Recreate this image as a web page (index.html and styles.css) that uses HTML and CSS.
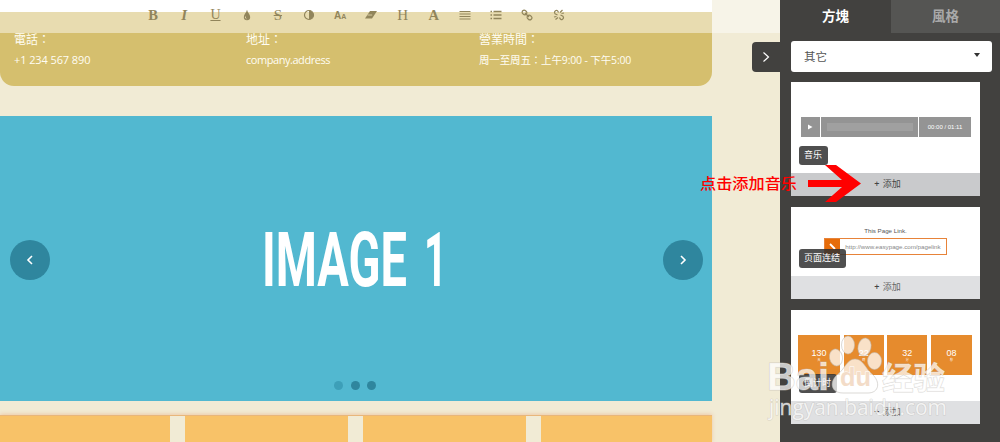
FILE: index.html
```html
<!DOCTYPE html>
<html lang="zh">
<head>
<meta charset="utf-8">
<title>Page editor</title>
<link rel="stylesheet" href="styles.css">
</head>
<body>
<div class="app">
  <main class="stage">
    <div class="page">
      <section class="contact" lang="zh-TW">
        <div class="contact-item phone"><h3>電話：</h3><p>+1 234 567 890</p></div>
        <div class="contact-item address"><h3>地址：</h3><p>company.address</p></div>
        <div class="contact-item hours"><h3>營業時間：</h3><p>周一至周五：上午9:00 - 下午5:00</p></div>
      </section>
      <section class="slider">
        <button class="arrow"><svg width="10" height="12" viewBox="0 0 10 12"><path d="M7 2 3 6l4 4"/></svg></button>
        <svg class="slide-title" width="182" height="68" viewBox="0 0 182 68"><text x="-4" y="60" textLength="145" lengthAdjust="spacingAndGlyphs">IMAGE</text><text x="158" y="60" textLength="23" lengthAdjust="spacingAndGlyphs">1</text></svg>
        <button class="arrow"><svg width="10" height="12" viewBox="0 0 10 12"><path d="m3 2 4 4-4 4"/></svg></button>
        <div class="dots"><i class="dot current"></i><i class="dot"></i><i class="dot"></i></div>
      </section>
      <section class="columns"><div></div><div></div><div></div><div></div></section>
    </div>
    <nav class="toolbar">
      <span class="tool bold">B</span>
      <span class="tool italic">I</span>
      <span class="tool under">U</span>
      <span class="tool"><svg viewBox="0 0 12 12"><path class="fill" d="M6 .8C6.700 4 9.200 5.500 9.200 8A3.200 3.200 0 0 1 2.800 8C2.800 5.500 5.300 4 6 .8z"/><path class="shine" d="M4.500 7.500v1.500l1 .8"/></svg></span>
      <span class="tool strike">S</span>
      <span class="tool"><svg viewBox="0 0 12 12"><circle cx="6" cy="6" r="4.500"/><path class="fill" d="M6 1.500a4.500 4.500 0 0 1 0 9z"/></svg></span>
      <span class="tool sizes">A<small>A</small></span>
      <span class="tool"><svg viewBox="0 0 12 12"><path class="fill" d="M5 2h7L7 9.500H0z"/><path class="cut" d="M2.500 6h4.700"/></svg></span>
      <span class="tool head">H</span>
      <span class="tool bold">A</span>
      <span class="tool"><svg viewBox="0 0 12 12"><path d="M.5 2.500h11M.5 5h11M.5 7.500h11M.5 10h11"/></svg></span>
      <span class="tool"><svg viewBox="0 0 12 12"><path class="thick" d="M3.500 2.500h8M3.500 6h8M3.500 9.500h8M.5 2.500H2M.5 6H2M.5 9.500H2"/></svg></span>
      <span class="tool"><svg viewBox="0 0 12 12"><rect x="1" y="1.500" width="5" height="4" rx="2" transform="rotate(45 3.500 3.500)"/><rect x="6" y="6.500" width="5" height="4" rx="2" transform="rotate(45 8.500 8.500)"/><path d="m4 4 4 4"/></svg></span>
      <span class="tool"><svg viewBox="0 0 12 12"><path d="M4.500 6 2 4.700Q.8 3 2.500 1.700T5.500 3.500M7.500 6 10 7.300q1.200 1.700-.5 3T6.500 8.500M7 3.500 9.500 1M8.500 4.500 11 4M5 8.500l-2.500 2M3.500 7.500 1 8"/></svg></span>
    </nav>
    <button class="collapse"><svg width="9" height="14" viewBox="0 0 9 14"><path d="m1.500 2.500 5 4.500-5 4.500"/></svg></button>
  </main>
  <aside class="panel">
    <div class="tabs"><div class="tab active">方塊</div><div class="tab">風格</div></div>
    <div class="panel-body">
      <div class="select"><span>其它</span><i class="caret"></i></div>
      <article class="card tall hovered">
        <div class="preview music">
          <div class="player">
            <div class="play"><svg width="5" height="6" viewBox="0 0 5 6"><path d="m0 .5 4.500 2.500L0 5.500z"/></svg></div>
            <div class="track"><i></i></div>
            <div class="time">00:00 / 01:11</div>
          </div>
          <span class="badge">音乐</span>
        </div>
        <div class="add"><b>+</b> 添加</div>
      </article>
      <article class="card short">
        <div class="preview linkbox">
          <p>This Page Link.</p>
          <div class="url"><span class="url-icon"><svg width="7" height="7" viewBox="0 0 7 7"><path d="m1 1 5 5"/></svg></span><span class="url-text">http://www.easypage.com/pagelink</span></div>
          <span class="badge">页面连结</span>
        </div>
        <div class="add"><b>+</b> 添加</div>
      </article>
      <article class="card tall">
        <div class="preview timer">
          <div class="counts">
            <div>130<small>天</small></div><div>22<small>時</small></div><div>32<small>分</small></div><div>08<small>秒</small></div>
          </div>
          <span class="badge">倒计时</span>
        </div>
        <div class="add"><b>+</b> 添加</div>
      </article>
    </div>
  </aside>
</div>
<svg class="note" width="166" height="46" viewBox="0 0 166 46">
  <text x="0" y="29" textLength="97" lengthAdjust="spacingAndGlyphs">点击添加音乐</text>
  <path d="M108 20h34l-17-15h11l25 18.500-25 18.500h-11l17-15h-34z"/>
</svg>
<svg class="watermark" width="190" height="94" viewBox="0 0 190 94">
  <g class="mark">
    <text class="brand" x="5" y="60" textLength="62" lengthAdjust="spacingAndGlyphs">Bai</text>
    <ellipse cx="86" cy="15" rx="6.500" ry="9"/>
    <ellipse cx="102.500" cy="17" rx="6.500" ry="9" transform="rotate(12 102.500 17)"/>
    <ellipse cx="74" cy="27.500" rx="6.500" ry="8.500" transform="rotate(-12 74 27.500)"/>
    <ellipse cx="112.500" cy="31" rx="7" ry="8.500"/>
    <path d="M93 29c8 0 10 9 17 15 9 8 7 19-4 19H81c-12 0-14-11-6-18 8-6 10-16 18-16z"/>
    <text class="du" x="78" y="56" textLength="31" lengthAdjust="spacingAndGlyphs">du</text>
    <text class="cjk" x="120" y="59" textLength="63" lengthAdjust="spacingAndGlyphs">经验</text>
    <text class="site" x="7" y="85" textLength="178" lengthAdjust="spacingAndGlyphs">jingyan.baidu.com</text>
  </g>
</svg>
</body>
</html>
```
FILE: styles.css
```css
* { box-sizing: border-box; }
body { margin: 0; overflow: hidden; font-family: "Open Sans", "Noto Sans CJK SC", sans-serif; }
h3, p { margin: 0; font-weight: 400; }
button { border: 0; padding: 0; }
svg { display: block; fill: none; }
.app { display: flex; width: 1000px; height: 442px; position: relative; overflow: hidden; }
.stage { position: relative; width: 780px; background: #f1ebd5; }
.page { width: 712px; height: 442px; border-top: 12px solid #fff; }
.contact { height: 74px; padding: 19px 14px 0; display: grid; grid-template-columns: 232px 233px 1fr; background: #d5bf6e; border-radius: 0 0 14px 14px; color: #fffdf3; font-family: "Open Sans", "Noto Sans CJK TC", sans-serif; }
.contact h3 { font-size: 12px; line-height: 18px; }
.contact p { font-size: 11px; line-height: 16px; margin-top: 3px; white-space: nowrap; }
.phone p { letter-spacing: -.1px; }
.address p { letter-spacing: -.45px; }
.contact .hours p { font-size: 10.500px; letter-spacing: -.15px; }
.slider { position: relative; height: 285px; margin-top: 30px; padding: 2px 9px 0 10px; display: flex; align-items: center; justify-content: space-between; background: #52b8d0; }
.arrow { width: 40px; height: 40px; border-radius: 50%; display: grid; place-items: center; background: #2f869e; }
.arrow path { stroke: #fff; stroke-width: 1.600; }
.slide-title { overflow: visible; }
.slide-title text { fill: #fff; font: 700 76px Roboto, sans-serif; }
.dots { position: absolute; left: 334px; bottom: 11.500px; display: flex; gap: 7.500px; }
.dot { width: 9px; height: 9px; border-radius: 50%; background: #2f869e; }
.dot.current { background: #3d9fb8; }
.columns { display: grid; grid-template-columns: 170px 163px 163px 171px; column-gap: 15px; height: 28px; margin-top: 14px; border-top: 1px solid #e8b67b; box-shadow: 0 -1px 4px rgba(238, 160, 110, .45); background: #f1ebd5; }
.columns div { background: #f8c268; }
.toolbar { position: absolute; inset: 0 0 auto 0; height: 33px; padding: 5px 0 0 137.500px; display: flex; background: rgba(255, 255, 255, .46); }
.tool { width: 31.200px; height: 20px; display: flex; align-items: center; justify-content: center; color: #91855b; font: 15px/20px "Liberation Serif", serif; }
.tool svg { width: 12px; height: 12px; stroke: #91855b; stroke-width: 1.200; }
.tool .fill { fill: #91855b; stroke: none; }
.tool .thick { stroke-width: 1.600; }
.tool .shine, .tool .cut { stroke: #e8dcb1; stroke-width: .8; }
.bold { font-weight: 700; font-size: 14.500px; }
.italic { font-style: italic; font-weight: 700; }
.under { text-decoration: underline; font-size: 14px; }
.strike { text-decoration: line-through; }
.sizes { align-items: baseline; font: 700 10px/22px "Liberation Sans", sans-serif; }
.sizes small { font-size: 7px; }
.collapse { position: absolute; left: 752px; top: 42px; width: 28px; height: 30px; border-radius: 4px 0 0 4px; display: grid; place-items: center; background: #42413f; }
.collapse path { stroke: #fff; stroke-width: 1.200; }
.panel { width: 220px; background: #42413f; }
.tabs { display: grid; grid-template-columns: 111px 109px; height: 33px; }
.tab { display: grid; place-items: center; background: #555553; color: #aaa; font: 700 13.500px/30px "Noto Sans CJK TC", sans-serif; padding-bottom: 3px; }
.tab.active { background: #42413f; color: #fff; }
.panel-body { padding: 8px 0 0 11px; }
.select { width: 201px; height: 31px; margin-bottom: 10px; padding: 0 12px 1px 13px; display: flex; align-items: center; justify-content: space-between; background: #fff; border-radius: 3px; color: #555; font-size: 11.500px; }
.caret { border: 3px solid transparent; border-top: 4px solid #333; border-bottom: 0; margin-bottom: 3px; }
.card { width: 189px; margin-bottom: 11px; display: flex; flex-direction: column; background: #fff; }
.tall { height: 114px; }
.short { height: 92px; }
.preview { position: relative; flex: 1; }
.add { height: 23px; background: #dfe0e2; color: #666; font-size: 9px; line-height: 22px; text-align: center; padding-left: 4px; }
.add b { font-weight: 600; color: #444; margin-right: 1px; }
.hovered .add { background: #c9cacc; color: #444; }
.music { padding: 35px 9px 0 10px; }
.player { display: grid; grid-template-columns: 19px 97px 1fr; gap: 1px; height: 20px; }
.player > div { background: #949494; display: grid; place-items: center; }
.play path { fill: #fff; }
.track i { width: 86px; height: 8px; background: #a0a0a0; }
.time { color: #fff; font: 6px "Liberation Sans", sans-serif; white-space: nowrap; }
.badge { position: absolute; left: 7.500px; bottom: 8px; height: 19px; padding: 0 5.500px; border-radius: 3px; background: rgba(50, 50, 50, .86); color: #fff; font-size: 9px; line-height: 18px; }
.linkbox { padding-top: 19px; color: #555; font: 6.200px/9px "Liberation Sans", sans-serif; }
.linkbox p { text-align: center; }
.url { width: 123px; height: 17px; margin: 3px 0 0 33px; display: flex; align-items: center; border: 1px solid #e78339; color: #888; }
.url-icon { width: 15px; height: 15px; display: grid; place-items: center; background: #e66c09; }
.url-icon path { stroke: #fff; stroke-width: 1.800; }
.url-text { flex: 1; text-align: center; }
.linkbox .badge { font-family: "Open Sans", "Noto Sans CJK SC", sans-serif; }
.timer { padding: 25px 8px 0 7px; }
.counts { display: grid; grid-template-columns: 42px 40px 40px 41px; justify-content: space-between; height: 40px; }
.counts div { background: #e68b2d; color: #fff; text-align: center; font: 9px/11px "Liberation Sans", sans-serif; padding-top: 13px; }
.counts small { display: block; font: 3px/3px "Noto Sans CJK TC", sans-serif; }
.note { position: absolute; left: 700px; top: 160px; }
.note text { font: 500 15px "Noto Sans CJK SC", sans-serif; fill: #f00; }
.note path { fill: #f00; }
.watermark { position: absolute; left: 762px; top: 330px; }
.mark { fill: rgba(255, 255, 255, .74); stroke: rgba(190, 186, 180, .55); stroke-width: 1; }
.mark text { paint-order: stroke; }
.brand { font: 700 39px "Liberation Sans", sans-serif; }
.mark .du { font: 700 25px "Liberation Sans", sans-serif; fill: #f3dcc8; stroke: #fff; stroke-width: 1; }
.cjk { font: 700 31px "Noto Sans CJK SC", sans-serif; }
.site { font: 21px "Open Sans", sans-serif; }
```
